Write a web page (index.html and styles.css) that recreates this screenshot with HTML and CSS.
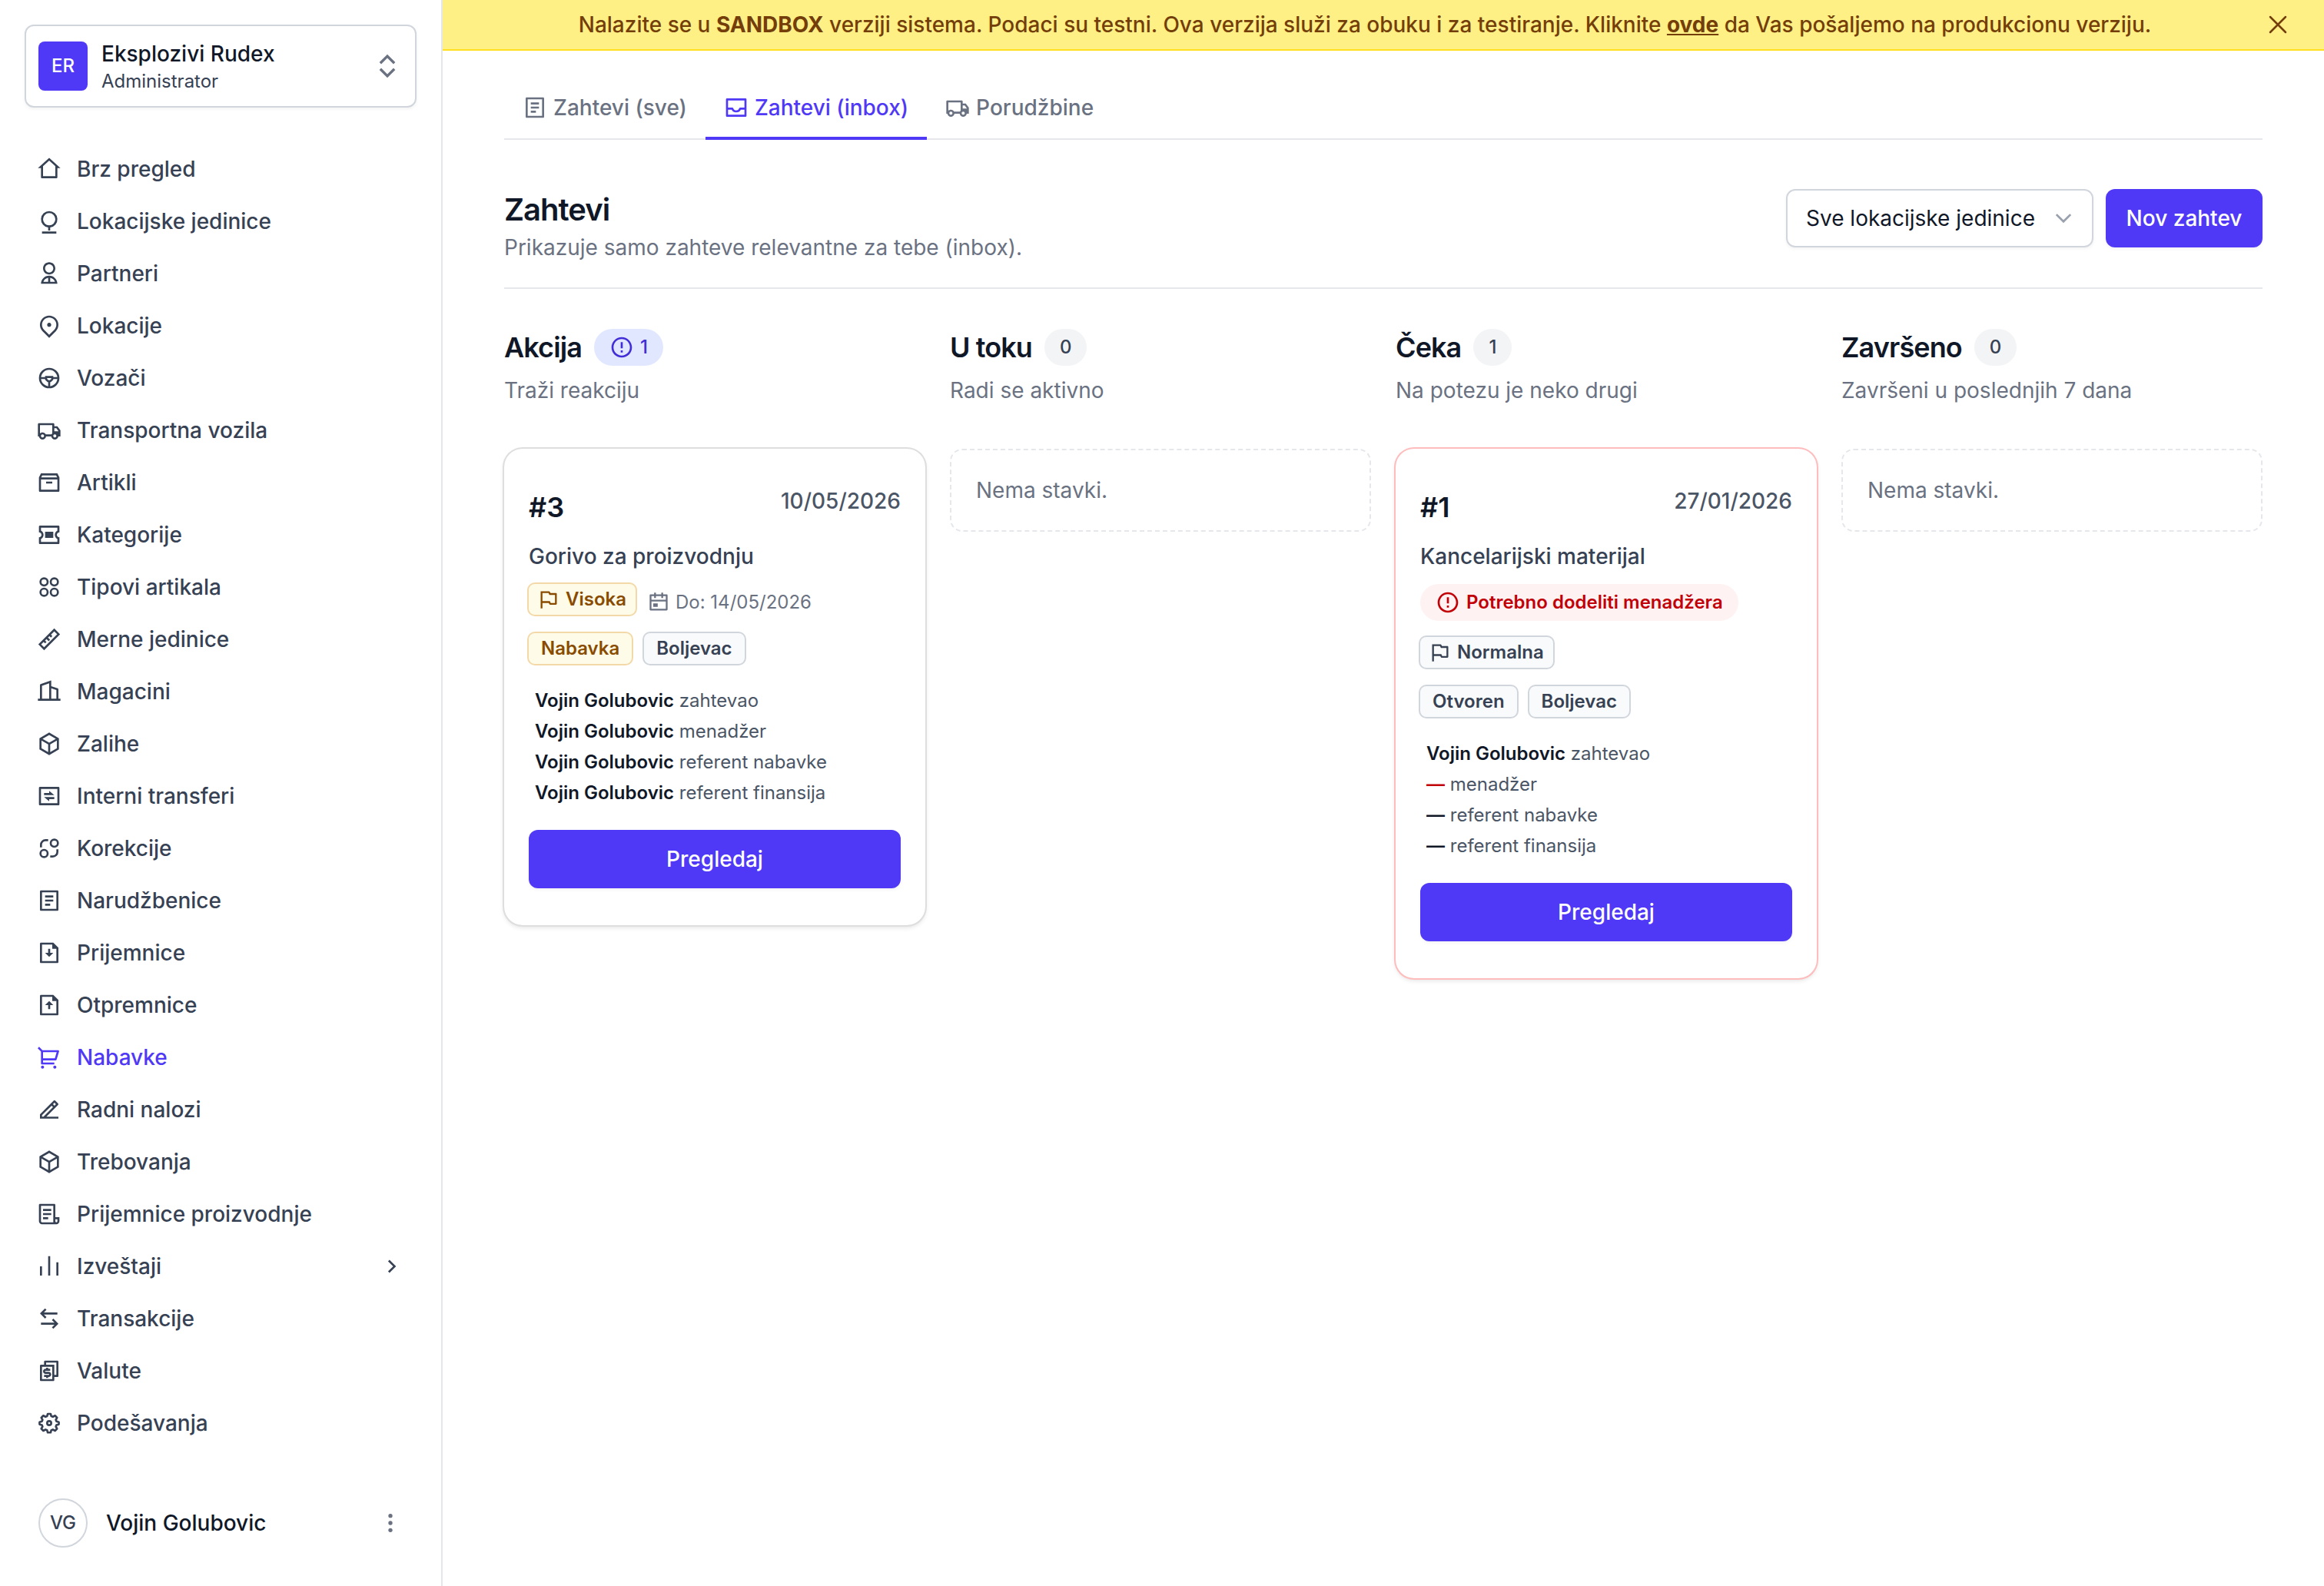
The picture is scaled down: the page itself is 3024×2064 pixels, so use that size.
FILE: index.html
```html
<!DOCTYPE html>
<html lang="sr">
<head>
<meta charset="utf-8">
<title>Zahtevi</title>
<link rel="stylesheet" href="styles.css">
</head>
<body>
<svg class="sprite" aria-hidden="true">
  <symbol id="home" viewBox="0 0 24 24"><path d="M19 21H5C4.44772 21 4 20.5523 4 20V11L1 11L11.3273 1.6115C11.7087 1.26475 12.2913 1.26475 12.6727 1.6115L23 11L20 11V20C20 20.5523 19.5523 21 19 21ZM6 19H18V9.15745L12 3.7029L6 9.15745V19Z"/></symbol>
  <symbol id="unit" viewBox="0 0 24 24"><path d="M11 17.938A8.001 8.001 0 0 1 12 2a8 8 0 0 1 1 15.938V21h-2v-3.062zM12 16a6 6 0 1 0 0-12 6 6 0 0 0 0 12zM5 22h14v2H5z"/></symbol>
  <symbol id="user" viewBox="0 0 24 24"><path d="M4 22C4 17.5817 7.58172 14 12 14C16.4183 14 20 17.5817 20 22H4ZM13 16.083V20H17.6586C16.9423 17.9735 15.1684 16.4467 13 16.083ZM11 20V16.083C8.83165 16.4467 7.05766 17.9735 6.34141 20H11ZM12 13C8.685 13 6 10.315 6 7C6 3.685 8.685 1 12 1C15.315 1 18 3.685 18 7C18 10.315 15.315 13 12 13ZM12 11C14.21 11 16 9.21 16 7C16 4.79 14.21 3 12 3C9.79 3 8 4.79 8 7C8 9.21 9.79 11 12 11Z"/></symbol>
  <symbol id="pin" viewBox="0 0 24 24"><path d="M12 20.8995L16.9497 15.9497C19.6834 13.2161 19.6834 8.78392 16.9497 6.05025C14.2161 3.31658 9.78392 3.31658 7.05025 6.05025C4.31658 8.78392 4.31658 13.2161 7.05025 15.9497L12 20.8995ZM12 23.7279L5.63604 17.364C2.12132 13.8492 2.12132 8.15076 5.63604 4.63604C9.15076 1.12132 14.8492 1.12132 18.364 4.63604C21.8787 8.15076 21.8787 13.8492 18.364 17.364L12 23.7279ZM12 13C13.1046 13 14 12.1046 14 11C14 9.89543 13.1046 9 12 9C10.8954 9 10 9.89543 10 11C10 12.1046 10.8954 13 12 13Z"/></symbol>
  <symbol id="wheel" viewBox="0 0 24 24"><g fill="none" stroke="currentColor" stroke-width="2"><circle cx="12" cy="12" r="9"/><path d="M3.2 12H9M15 12h5.8M12 16v5M9 11h6v2.2L13.2 15h-2.4L9 13.2z"/></g></symbol>
  <symbol id="truck" viewBox="0 0 24 24"><path d="M8.96456 18C8.72194 19.6961 7.26324 21 5.5 21C3.73676 21 2.27806 19.6961 2.03544 18H1V6C1 5.44772 1.44772 5 2 5H16C16.5523 5 17 5.44772 17 6V8H20L23 12.0557V18H20.9646C20.7219 19.6961 19.2632 21 17.5 21C15.7368 21 14.2781 19.6961 14.0354 18H8.96456ZM15 7H3V15.0505C3.63526 14.4022 4.52066 14 5.5 14C6.8962 14 8.10145 14.8175 8.66318 16H14.3368C14.5045 15.647 14.7296 15.3264 15 15.0505V7ZM17 13H21V12.715L18.9917 10H17V13ZM17.5 19C18.1531 19 18.7087 18.5826 18.9146 18C18.9699 17.8436 19 17.6753 19 17.5C19 16.6716 18.3284 16 17.5 16C16.6716 16 16 16.6716 16 17.5C16 17.6753 16.0301 17.8436 16.0854 18C16.2913 18.5826 16.8469 19 17.5 19ZM7 17.5C7 16.6716 6.32843 16 5.5 16C4.67157 16 4 16.6716 4 17.5C4 17.6753 4.03008 17.8436 4.08535 18C4.29127 18.5826 4.84689 19 5.5 19C6.15311 19 6.70873 18.5826 6.91465 18C6.96992 17.8436 7 17.6753 7 17.5Z"/></symbol>
  <symbol id="archive" viewBox="0 0 24 24"><path d="M20 3L22 7V20C22 20.5523 21.5523 21 21 21H3C2.44772 21 2 20.5523 2 20V7.00353L4 3H20ZM20 9H4V19H20V9ZM19.764 7L18.764 5H5.236L4.237 7H19.764ZM15 11V13H9V11H15Z"/></symbol>
  <symbol id="ticket" viewBox="0 0 24 24"><path d="M21 3C21.5523 3 22 3.44772 22 4V9.5C20.6193 9.5 19.5 10.6193 19.5 12C19.5 13.3807 20.6193 14.5 22 14.5V20C22 20.5523 21.5523 21 21 21H3C2.44772 21 2 20.5523 2 20V14.5C3.38071 14.5 4.5 13.3807 4.5 12C4.5 10.6193 3.38071 9.5 2 9.5V4C2 3.44772 2.44772 3 3 3H21ZM20 5H4V7.96776C5.48858 8.7044 6.5 10.2364 6.5 12C6.5 13.7636 5.48858 15.2956 4 16.0322V19H20V16.0322C18.5114 15.2956 17.5 13.7636 17.5 12C17.5 10.2364 18.5114 8.7044 20 7.96776V5ZM16 9V15H8V9H16Z"/></symbol>
  <symbol id="apps" viewBox="0 0 24 24"><g fill="none" stroke="currentColor" stroke-width="2"><circle cx="7" cy="7" r="3.5"/><circle cx="17" cy="7" r="3.5"/><circle cx="7" cy="17" r="3.5"/><circle cx="17" cy="17" r="3.5"/></g></symbol>
  <symbol id="ruler" viewBox="0 0 24 24"><g fill="none" stroke="currentColor" stroke-width="2"><path d="M16.95 2.81l4.24 4.24L7.05 21.19l-4.24-4.24zM6.6 13.2l2.1 2.1M9.4 10.3l2.8 2.8M12.3 7.5l2.1 2.1"/></g></symbol>
  <symbol id="building" viewBox="0 0 24 24"><path d="M3 19V5.70046C3 5.27995 3.26307 4.90437 3.65826 4.76067L13.3291 1.24398C13.5886 1.14961 13.8755 1.28349 13.9699 1.54301C13.9898 1.59778 14 1.65561 14 1.71388V6.6667L20.3162 8.77211C20.7246 8.90822 21 9.29036 21 9.72076V19H23V21H1V19H3ZM5 19H12V3.85543L5 6.40089V19ZM19 19V10.4416L14 8.77488V19H19Z"/></symbol>
  <symbol id="box" viewBox="0 0 24 24"><path d="M12 1L21.5 6.5V17.5L12 23L2.5 17.5V6.5L12 1ZM5.49388 7.0777L12.0001 10.8444L18.5062 7.07774L12 3.311L5.49388 7.0777ZM4.5 8.81329V16.3469L11.0001 20.1101V12.5765L4.5 8.81329ZM13.0001 20.11L19.5 16.3469V8.81337L13.0001 12.5765V20.11Z"/></symbol>
  <symbol id="exchange" viewBox="0 0 24 24"><path d="M3 3H21C21.5523 3 22 3.44772 22 4V20C22 20.5523 21.5523 21 21 21H3C2.44772 21 2 20.5523 2 20V4C2 3.44772 2.44772 3 3 3ZM4 5V19H20V5H4ZM12 9V7L17 11H7V9H12ZM12 17L7 13H17V15H12V17Z"/></symbol>
  <symbol id="correct" viewBox="0 0 24 24"><g fill="none" stroke="currentColor" stroke-width="2"><circle cx="17" cy="7" r="3.5"/><circle cx="7" cy="17" r="3.5"/><path d="M4 11V8.5A4.5 4.5 0 0 1 8.5 4H11M20 13v2.500A4.500 4.500 0 0 1 15.500 20H13"/></g></symbol>
  <symbol id="list" viewBox="0 0 24 24"><path d="M20 22H4C3.44772 22 3 21.5523 3 21V3C3 2.44772 3.44772 2 4 2H20C20.5523 2 21 2.44772 21 3V21C21 21.5523 20.5523 22 20 22ZM19 20V4H5V20H19ZM8 7H16V9H8V7ZM8 11H16V13H8V11ZM8 15H13V17H8V15Z"/></symbol>
  <symbol id="download" viewBox="0 0 24 24"><path d="M15 4H5V20H19V8H15V4ZM3 2.9918C3 2.44405 3.44749 2 3.9985 2H16L20.9997 7L21 20.9925C21 21.5489 20.5551 22 20.0066 22H3.9934C3.44476 22 3 21.5447 3 21.0082V2.9918ZM13 12V8H11V12H8L12 16L16 12H13Z"/></symbol>
  <symbol id="upload" viewBox="0 0 24 24"><path d="M15 4H5V20H19V8H15V4ZM3 2.9918C3 2.44405 3.44749 2 3.9985 2H16L20.9997 7L21 20.9925C21 21.5489 20.5551 22 20.0066 22H3.9934C3.44476 22 3 21.5447 3 21.0082V2.9918ZM13 12V16H11V12H8L12 8L16 12H13Z"/></symbol>
  <symbol id="cart" viewBox="0 0 24 24"><path d="M4.00436 6.41686L0.761719 3.17422L2.17593 1.76001L5.41857 5.00265H20.6603C21.2126 5.00265 21.6603 5.45037 21.6603 6.00265C21.6603 6.09997 21.6461 6.19678 21.6182 6.29L19.2182 14.29C19.0913 14.713 18.7019 15.0027 18.2603 15.0027H6.00436V17.0027H17.0044V19.0027H5.00436C4.45207 19.0027 4.00436 18.5549 4.00436 18.0027V6.41686ZM6.00436 7.00265V13.0027H17.5163L19.3163 7.00265H6.00436ZM5.50436 23.0027C4.67593 23.0027 4.00436 22.3311 4.00436 21.5027C4.00436 20.6742 4.67593 20.0027 5.50436 20.0027C6.33279 20.0027 7.00436 20.6742 7.00436 21.5027C7.00436 22.3311 6.33279 23.0027 5.50436 23.0027ZM17.5044 23.0027C16.6759 23.0027 16.0044 22.3311 16.0044 21.5027C16.0044 20.6742 16.6759 20.0027 17.5044 20.0027C18.3328 20.0027 19.0044 20.6742 19.0044 21.5027C19.0044 22.3311 18.3328 23.0027 17.5044 23.0027Z"/></symbol>
  <symbol id="edit" viewBox="0 0 24 24"><path d="M5 18.89H6.41421L15.7279 9.57627L14.3137 8.16206L5 17.4758V18.89ZM21 20.89H3V16.6473L16.435 3.21231C16.8256 2.82179 17.4587 2.82179 17.8492 3.21231L20.6777 6.04074C21.0682 6.43126 21.0682 7.06443 20.6777 7.45495L9.24264 18.89H21V20.89ZM15.7279 6.74785L17.1421 8.16206L18.5563 6.74785L17.1421 5.33363L15.7279 6.74785Z"/></symbol>
  <symbol id="scroll" viewBox="0 0 24 24"><path d="M19 22H5C3.34315 22 2 20.6569 2 19V3C2 2.44772 2.44772 2 3 2H17C17.5523 2 18 2.44772 18 3V15H22V19C22 20.6569 20.6569 22 19 22ZM18 17V19C18 19.5523 18.4477 20 19 20C19.5523 20 20 19.5523 20 19V17H18ZM16 20V4H4V19C4 19.5523 4.44772 20 5 20H16ZM6 7H14V9H6V7ZM6 11H14V13H6V11ZM6 15H11V17H6V15Z"/></symbol>
  <symbol id="chart" viewBox="0 0 24 24"><path d="M3 12H5V21H3V12ZM19 8H21V21H19V8ZM11 2H13V21H11V2Z"/></symbol>
  <symbol id="swap" viewBox="0 0 24 24"><path d="M16.0503 12.0498L21 16.9996L16.0503 21.9493L14.636 20.5351L17.172 17.9988L4 17.9996V15.9996L17.172 15.9988L14.636 13.464L16.0503 12.0498ZM7.94975 2.0498L9.36396 3.46402L6.828 5.9988L20 5.99955V7.99955L6.828 7.9988L9.36396 10.5351L7.94975 11.9493L3 6.99955L7.94975 2.0498Z"/></symbol>
  <symbol id="currency" viewBox="0 0 24 24"><path d="M7 6V3C7 2.44772 7.44772 2 8 2H20C20.5523 2 21 2.44772 21 3V17C21 17.5523 20.5523 18 20 18L17 18 17 20.9991C17 21.5519 16.5499 22 15.9925 22H4.00728C3.45086 22 3 21.5554 3 20.9991L3.0026 7.00087C3.0027 6.44811 3.45264 6 4.00942 6H7ZM5.00242 8L5.00019 20H14.9998V8H5.00242ZM9 6H17L17 16H19V4H9V6ZM7 16H11.5C11.7761 16 12 15.7761 12 15.5C12 15.2239 11.7761 15 11.5 15H8.5C7.11929 15 6 13.8807 6 12.5C6 11.1193 7.11929 10 8.5 10H9V9H11V10H13V12H8.5C8.22386 12 8 12.2239 8 12.5C8 12.7761 8.22386 13 8.5 13H11.5C12.8807 13 14 14.1193 14 15.5C14 16.8807 12.8807 18 11.5 18H11V19H9V18H7V16Z"/></symbol>
  <symbol id="gear" viewBox="0 0 24 24"><g fill="none" stroke="currentColor" stroke-width="2" stroke-linejoin="round"><path d="M10.600 3h2.800l.7 2.300 1.500.6 2.100-1.200 2 2-1.200 2.100.6 1.500 2.300.7v2.200l-2.300.7-.6 1.500 1.200 2.100-2 2-2.100-1.200-1.500.6-.7 2.300h-2.800l-.7-2.300-1.500-.6-2.100 1.200-2-2 1.200-2.100-.6-1.500-2.300-.7v-2.200l2.300-.7.6-1.500-1.200-2.100 2-2 2.100 1.200 1.500-.6z"/><circle cx="12" cy="12" r="2"/></g></symbol>
  <symbol id="inbox" viewBox="0 0 24 24"><g fill="none" stroke="currentColor" stroke-width="2" stroke-linejoin="round"><path d="M3 4h18v16H3zM3 13h5.200a4 4 0 0 0 7.600 0H21"/></g></symbol>
  <symbol id="warning" viewBox="0 0 24 24"><path d="M12 22C6.47715 22 2 17.5228 2 12C2 6.47715 6.47715 2 12 2C17.5228 2 22 6.47715 22 12C22 17.5228 17.5228 22 12 22ZM12 20C16.4183 20 20 16.4183 20 12C20 7.58172 16.4183 4 12 4C7.58172 4 4 7.58172 4 12C4 16.4183 7.58172 20 12 20ZM11 15H13V17H11V15ZM11 7H13V13H11V7Z"/></symbol>
  <symbol id="flag" viewBox="0 0 24 24"><path d="M12.382 3C12.7607 3 13.107 3.214 13.2764 3.55279L14 5H20C20.5523 5 21 5.44772 21 6V17C21 17.5523 20.5523 18 20 18H13.618C13.2393 18 12.893 17.786 12.7236 17.4472L12 16H5V22H3V3H12.382ZM11.7639 5H5V14H13.2361L14.2361 16H19V7H12.7639L11.7639 5Z"/></symbol>
  <symbol id="calendar" viewBox="0 0 24 24"><path d="M9 1V3H15V1H17V3H21C21.5523 3 22 3.44772 22 4V20C22 20.5523 21.5523 21 21 21H3C2.44772 21 2 20.5523 2 20V4C2 3.44772 2.44772 3 3 3H7V1H9ZM20 11H4V19H20V11ZM11 13V17H6V13H11ZM7 5H4V9H20V5H17V7H15V5H9V7H7V5Z"/></symbol>
  <symbol id="right" viewBox="0 0 24 24"><path d="M13.1717 12.0007L8.22192 7.05093L9.63614 5.63672L16.0001 12.0007L9.63614 18.3646L8.22192 16.9504L13.1717 12.0007Z"/></symbol>
  <symbol id="updown" viewBox="0 0 24 24"><path d="M18.2072 9.0428L12.0001 2.83569L5.793 9.0428L7.20721 10.4571L12.0001 5.66412L16.793 10.4571L18.2072 9.0428ZM5.79285 14.9572L12 21.1643L18.2072 14.9572L16.793 13.543L12 18.3359L7.20706 13.543L5.79285 14.9572Z"/></symbol>
  <symbol id="down" viewBox="0 0 24 24"><path d="M3.500 7.500L12 16l8.500-8.500" fill="none" stroke="currentColor" stroke-width="2.600"/></symbol>
  <symbol id="close" viewBox="0 0 24 24"><path d="M6 18L18 6M6 6l12 12" fill="none" stroke="currentColor" stroke-width="1.500" stroke-linecap="round"/></symbol>
  <symbol id="dots" viewBox="0 0 24 24"><circle cx="12" cy="5" r="2"/><circle cx="12" cy="12" r="2"/><circle cx="12" cy="19" r="2"/></symbol>
</svg>
<div class="app">
  <aside class="sidebar">
    <button class="org">
      <span class="org-logo">ER</span>
      <span class="org-text"><span class="org-name">Eksplozivi Rudex</span><span class="org-role">Administrator</span></span>
      <svg class="org-toggle"><use href="#updown"/></svg>
    </button>
    <nav class="nav">
      <a class="nav-item"><svg class="icon"><use href="#home"/></svg>Brz pregled</a>
      <a class="nav-item"><svg class="icon"><use href="#unit"/></svg>Lokacijske jedinice</a>
      <a class="nav-item"><svg class="icon"><use href="#user"/></svg>Partneri</a>
      <a class="nav-item"><svg class="icon"><use href="#pin"/></svg>Lokacije</a>
      <a class="nav-item"><svg class="icon"><use href="#wheel"/></svg>Vozači</a>
      <a class="nav-item"><svg class="icon"><use href="#truck"/></svg>Transportna vozila</a>
      <a class="nav-item"><svg class="icon"><use href="#archive"/></svg>Artikli</a>
      <a class="nav-item"><svg class="icon"><use href="#ticket"/></svg>Kategorije</a>
      <a class="nav-item"><svg class="icon"><use href="#apps"/></svg>Tipovi artikala</a>
      <a class="nav-item"><svg class="icon"><use href="#ruler"/></svg>Merne jedinice</a>
      <a class="nav-item"><svg class="icon"><use href="#building"/></svg>Magacini</a>
      <a class="nav-item"><svg class="icon"><use href="#box"/></svg>Zalihe</a>
      <a class="nav-item"><svg class="icon"><use href="#exchange"/></svg>Interni transferi</a>
      <a class="nav-item"><svg class="icon"><use href="#correct"/></svg>Korekcije</a>
      <a class="nav-item"><svg class="icon"><use href="#list"/></svg>Narudžbenice</a>
      <a class="nav-item"><svg class="icon"><use href="#download"/></svg>Prijemnice</a>
      <a class="nav-item"><svg class="icon"><use href="#upload"/></svg>Otpremnice</a>
      <a class="nav-item nav-item-active"><svg class="icon"><use href="#cart"/></svg>Nabavke</a>
      <a class="nav-item"><svg class="icon"><use href="#edit"/></svg>Radni nalozi</a>
      <a class="nav-item"><svg class="icon"><use href="#box"/></svg>Trebovanja</a>
      <a class="nav-item"><svg class="icon"><use href="#scroll"/></svg>Prijemnice proizvodnje</a>
      <a class="nav-item"><svg class="icon"><use href="#chart"/></svg>Izveštaji<svg class="icon nav-more"><use href="#right"/></svg></a>
      <a class="nav-item"><svg class="icon"><use href="#swap"/></svg>Transakcije</a>
      <a class="nav-item"><svg class="icon"><use href="#currency"/></svg>Valute</a>
      <a class="nav-item"><svg class="icon"><use href="#gear"/></svg>Podešavanja</a>
    </nav>
    <div class="account">
      <span class="avatar">VG</span>
      <span class="account-name">Vojin Golubovic</span>
      <svg class="account-menu"><use href="#dots"/></svg>
    </div>
  </aside>
  <main class="main">
    <div class="banner">
      <p class="banner-text">Nalazite se u <b>SANDBOX</b> verziji sistema. Podaci su testni. Ova verzija služi za obuku i za testiranje. Kliknite <a class="banner-link">ovde</a> da Vas pošaljemo na produkcionu verziju.</p>
      <svg class="banner-close"><use href="#close"/></svg>
    </div>
    <div class="content">
      <div class="tabs">
        <a class="tab"><svg class="icon"><use href="#list"/></svg>Zahtevi (sve)</a>
        <a class="tab tab-active"><svg class="icon"><use href="#inbox"/></svg>Zahtevi (inbox)</a>
        <a class="tab"><svg class="icon"><use href="#truck"/></svg>Porudžbine</a>
      </div>
      <header class="page-head">
        <div>
          <h1 class="page-title">Zahtevi</h1>
          <p class="page-sub">Prikazuje samo zahteve relevantne za tebe (inbox).</p>
        </div>
        <div class="actions">
          <button class="select"><span>Sve lokacijske jedinice</span><svg class="select-arrow"><use href="#down"/></svg></button>
          <button class="btn btn-new">Nov zahtev</button>
        </div>
      </header>
      <div class="board">
        <section class="column">
          <h2 class="column-title">Akcija <span class="count count-alert"><svg class="icon"><use href="#warning"/></svg>1</span></h2>
          <p class="column-sub">Traži reakciju</p>
          <article class="card">
            <div class="card-top"><h3 class="card-id">#3</h3><time class="card-date">10/05/2026</time></div>
            <p class="card-name">Gorivo za proizvodnju</p>
            <div class="tags">
              <span class="tag tag-flag tag-yellow"><svg class="icon-sm"><use href="#flag"/></svg>Visoka</span>
              <span class="due"><svg class="icon-sm"><use href="#calendar"/></svg>Do: 14/05/2026</span>
            </div>
            <div class="tags"><span class="tag tag-yellow">Nabavka</span><span class="tag">Boljevac</span></div>
            <ul class="people">
              <li><b>Vojin Golubovic</b> zahtevao</li>
              <li><b>Vojin Golubovic</b> menadžer</li>
              <li><b>Vojin Golubovic</b> referent nabavke</li>
              <li><b>Vojin Golubovic</b> referent finansija</li>
            </ul>
            <button class="btn btn-wide">Pregledaj</button>
          </article>
        </section>
        <section class="column">
          <h2 class="column-title">U toku <span class="count">0</span></h2>
          <p class="column-sub">Radi se aktivno</p>
          <div class="empty">Nema stavki.</div>
        </section>
        <section class="column">
          <h2 class="column-title">Čeka <span class="count">1</span></h2>
          <p class="column-sub">Na potezu je neko drugi</p>
          <article class="card card-alert">
            <div class="card-top"><h3 class="card-id">#1</h3><time class="card-date">27/01/2026</time></div>
            <p class="card-name">Kancelarijski materijal</p>
            <div class="notice"><svg class="icon"><use href="#warning"/></svg>Potrebno dodeliti menadžera</div>
            <div class="tags"><span class="tag tag-flag"><svg class="icon-sm"><use href="#flag"/></svg>Normalna</span></div>
            <div class="tags"><span class="tag">Otvoren</span><span class="tag">Boljevac</span></div>
            <ul class="people">
              <li><b>Vojin Golubovic</b> zahtevao</li>
              <li><b class="missing">—</b> menadžer</li>
              <li><b>—</b> referent nabavke</li>
              <li><b>—</b> referent finansija</li>
            </ul>
            <button class="btn btn-wide">Pregledaj</button>
          </article>
        </section>
        <section class="column">
          <h2 class="column-title">Završeno <span class="count">0</span></h2>
          <p class="column-sub">Završeni u poslednjih 7 dana</p>
          <div class="empty">Nema stavki.</div>
        </section>
      </div>
    </div>
  </main>
</div>
</body>
</html>
```
FILE: styles.css
```css
* { box-sizing: border-box; margin: 0; padding: 0; }
body {
  font-family: Inter, "Liberation Sans", sans-serif;
  font-size: 28px;
  line-height: 40px;
  color: #101828;
  background: #fff;
}
button { font: inherit; border: 0; background: none; color: inherit; }
ul { list-style: none; }
svg { fill: currentColor; flex: none; display: block; }
.sprite { position: absolute; width: 0; height: 0; }
.icon { width: 32px; height: 32px; }
.icon-sm { width: 28px; height: 28px; }

.app { display: flex; height: 2064px; overflow: hidden; }

/* Sidebar */
.sidebar {
  width: 576px;
  flex: none;
  display: flex;
  flex-direction: column;
  padding: 32px 32px 50px;
  border-right: 2px solid #e5e7eb;
}
.org {
  display: flex;
  align-items: center;
  height: 108px;
  padding: 0 16px;
  border: 2px solid #d1d5dc;
  border-radius: 12px;
  box-shadow: 0 2px 4px rgba(0, 0, 0, .05);
  text-align: left;
}
.org-logo {
  width: 64px;
  height: 64px;
  line-height: 64px;
  border-radius: 8px;
  background: #4f39f6;
  color: #fff;
  font-size: 24px;
  font-weight: 500;
  text-align: center;
}
.org-text { flex: 1; display: flex; flex-direction: column; margin-left: 18px; }
.org-name { font-weight: 500; line-height: 40px; }
.org-role { font-size: 24px; line-height: 32px; color: #364153; }
.org-toggle { width: 40px; height: 40px; color: #6a7282; }
.nav { margin-top: 46px; }
.nav-item {
  display: flex;
  align-items: center;
  gap: 20px;
  height: 68px;
  padding: 0 16px;
  color: #364153;
  font-weight: 500;
}
.nav-item-active { color: #4f39f6; }
.nav-more { margin-left: auto; }
.account { display: flex; align-items: center; margin-top: auto; padding: 0 18px; }
.avatar {
  width: 64px;
  height: 64px;
  line-height: 60px;
  border: 2px solid #d1d5dc;
  border-radius: 50%;
  color: #364153;
  font-size: 24px;
  font-weight: 500;
  text-align: center;
}
.account-name { flex: 1; margin-left: 24px; font-weight: 500; }
.account-menu { width: 32px; height: 32px; color: #6a7282; }

/* Banner */
.main { flex: 1; min-width: 0; }
.banner {
  display: flex;
  align-items: center;
  height: 66px;
  padding: 0 40px 0 32px;
  background: #fff085;
  border-bottom: 2px solid #ffdf20;
  color: #733e0a;
}
.banner-text { flex: 1; text-align: center; font-weight: 500; }
.banner-text b { font-weight: 700; }
.banner-link { font-weight: 700; text-decoration: underline; }
.banner-close { width: 40px; height: 40px; }

/* Page header */
.content { padding: 36px 80px 0; }
.tabs { display: flex; height: 80px; border-bottom: 2px solid #e5e7eb; }
.tab {
  display: flex;
  align-items: center;
  gap: 8px;
  height: 80px;
  padding: 0 24px;
  border-bottom: 4px solid transparent;
  color: #6a7282;
  font-weight: 500;
}
.tab-active { border-color: #4f39f6; color: #4f39f6; }
.page-head {
  display: flex;
  justify-content: space-between;
  height: 194px;
  padding-top: 64px;
  border-bottom: 2px solid #e5e7eb;
}
.page-title { font-size: 40px; line-height: 54px; font-weight: 600; letter-spacing: -1px; }
.page-sub { margin-top: 2px; color: #6a7282; line-height: 40px; }
.actions { display: flex; gap: 16px; }
.select {
  display: flex;
  align-items: center;
  justify-content: space-between;
  width: 400px;
  height: 76px;
  padding: 0 24px;
  border: 2px solid #d1d5dc;
  border-radius: 12px;
  box-shadow: 0 2px 4px rgba(0, 0, 0, .05);
}
.select-arrow { width: 26px; height: 26px; color: #99a1af; }
.btn {
  height: 76px;
  border-radius: 12px;
  background: #4f39f6;
  color: #fff;
  font-weight: 500;
  box-shadow: 0 2px 4px rgba(0, 0, 0, .05);
}
.btn-new { width: 204px; }
.btn-wide { width: 100%; }

/* Board */
.board { display: grid; grid-template-columns: repeat(4, 1fr); gap: 32px; padding-top: 52px; }
.column-title { display: flex; align-items: center; gap: 16px; height: 48px; font-size: 36px; font-weight: 600; letter-spacing: -.9px; }
.count {
  display: flex;
  align-items: center;
  gap: 8px;
  height: 48px;
  padding: 0 20px;
  border-radius: 24px;
  background: #f3f4f6;
  color: #364153;
  font-size: 24px;
  font-weight: 500;
  letter-spacing: 0;
}
.count-alert { background: #e0e7ff; color: #432dd7; }
.column-sub { margin-top: 12px; margin-bottom: 56px; color: #6a7282; }
.empty { height: 108px; padding: 32px; border: 2px dashed #e5e7eb; border-radius: 16px; color: #6a7282; }
.card {
  padding: 48px 32px;
  border-radius: 24px;
  box-shadow: 0 0 0 2px #dedede, 0 3px 6px rgba(0, 0, 0, .12);
}
.card-alert { box-shadow: 0 0 0 2px #ffbcbc, 0 3px 6px rgba(0, 0, 0, .12); }
.card-top { display: flex; justify-content: space-between; }
.card-id { margin-top: 8px; font-size: 36px; line-height: 40px; font-weight: 600; }
.card-date { color: #4a5565; font-weight: 500; }
.card-name { margin: 24px 0 16px; color: #364153; font-weight: 500; }
.tags { display: flex; gap: 16px; margin-bottom: 24px; }
.tag {
  display: flex;
  align-items: center;
  gap: 8px;
  height: 40px;
  padding: 0 16px;
  border-radius: 8px;
  background: #f9fafb;
  box-shadow: 0 0 0 2px #d1d5dc;
  color: #364153;
  font-size: 24px;
  font-weight: 600;
}
.tag-flag { padding: 0 12px; }
.tag-yellow { background: #fefce8; box-shadow: 0 0 0 2px #f3d9a8; color: #894b00; }
.due { display: flex; align-items: center; gap: 8px; height: 48px; margin-bottom: -8px; color: #6a7282; font-size: 24px; }
.notice {
  display: flex;
  align-items: center;
  gap: 8px;
  width: fit-content;
  height: 48px;
  margin-bottom: 21px;
  padding: 0 20px;
  border-radius: 24px;
  background: #fef2f2;
  color: #c10007;
  font-size: 24px;
  font-weight: 600;
}
.people { margin: 28px 0 28px; padding-left: 8px; color: #4a5565; font-size: 24px; }
.people b { color: #101828; font-weight: 600; }
.people .missing { color: #c10007; }
```
